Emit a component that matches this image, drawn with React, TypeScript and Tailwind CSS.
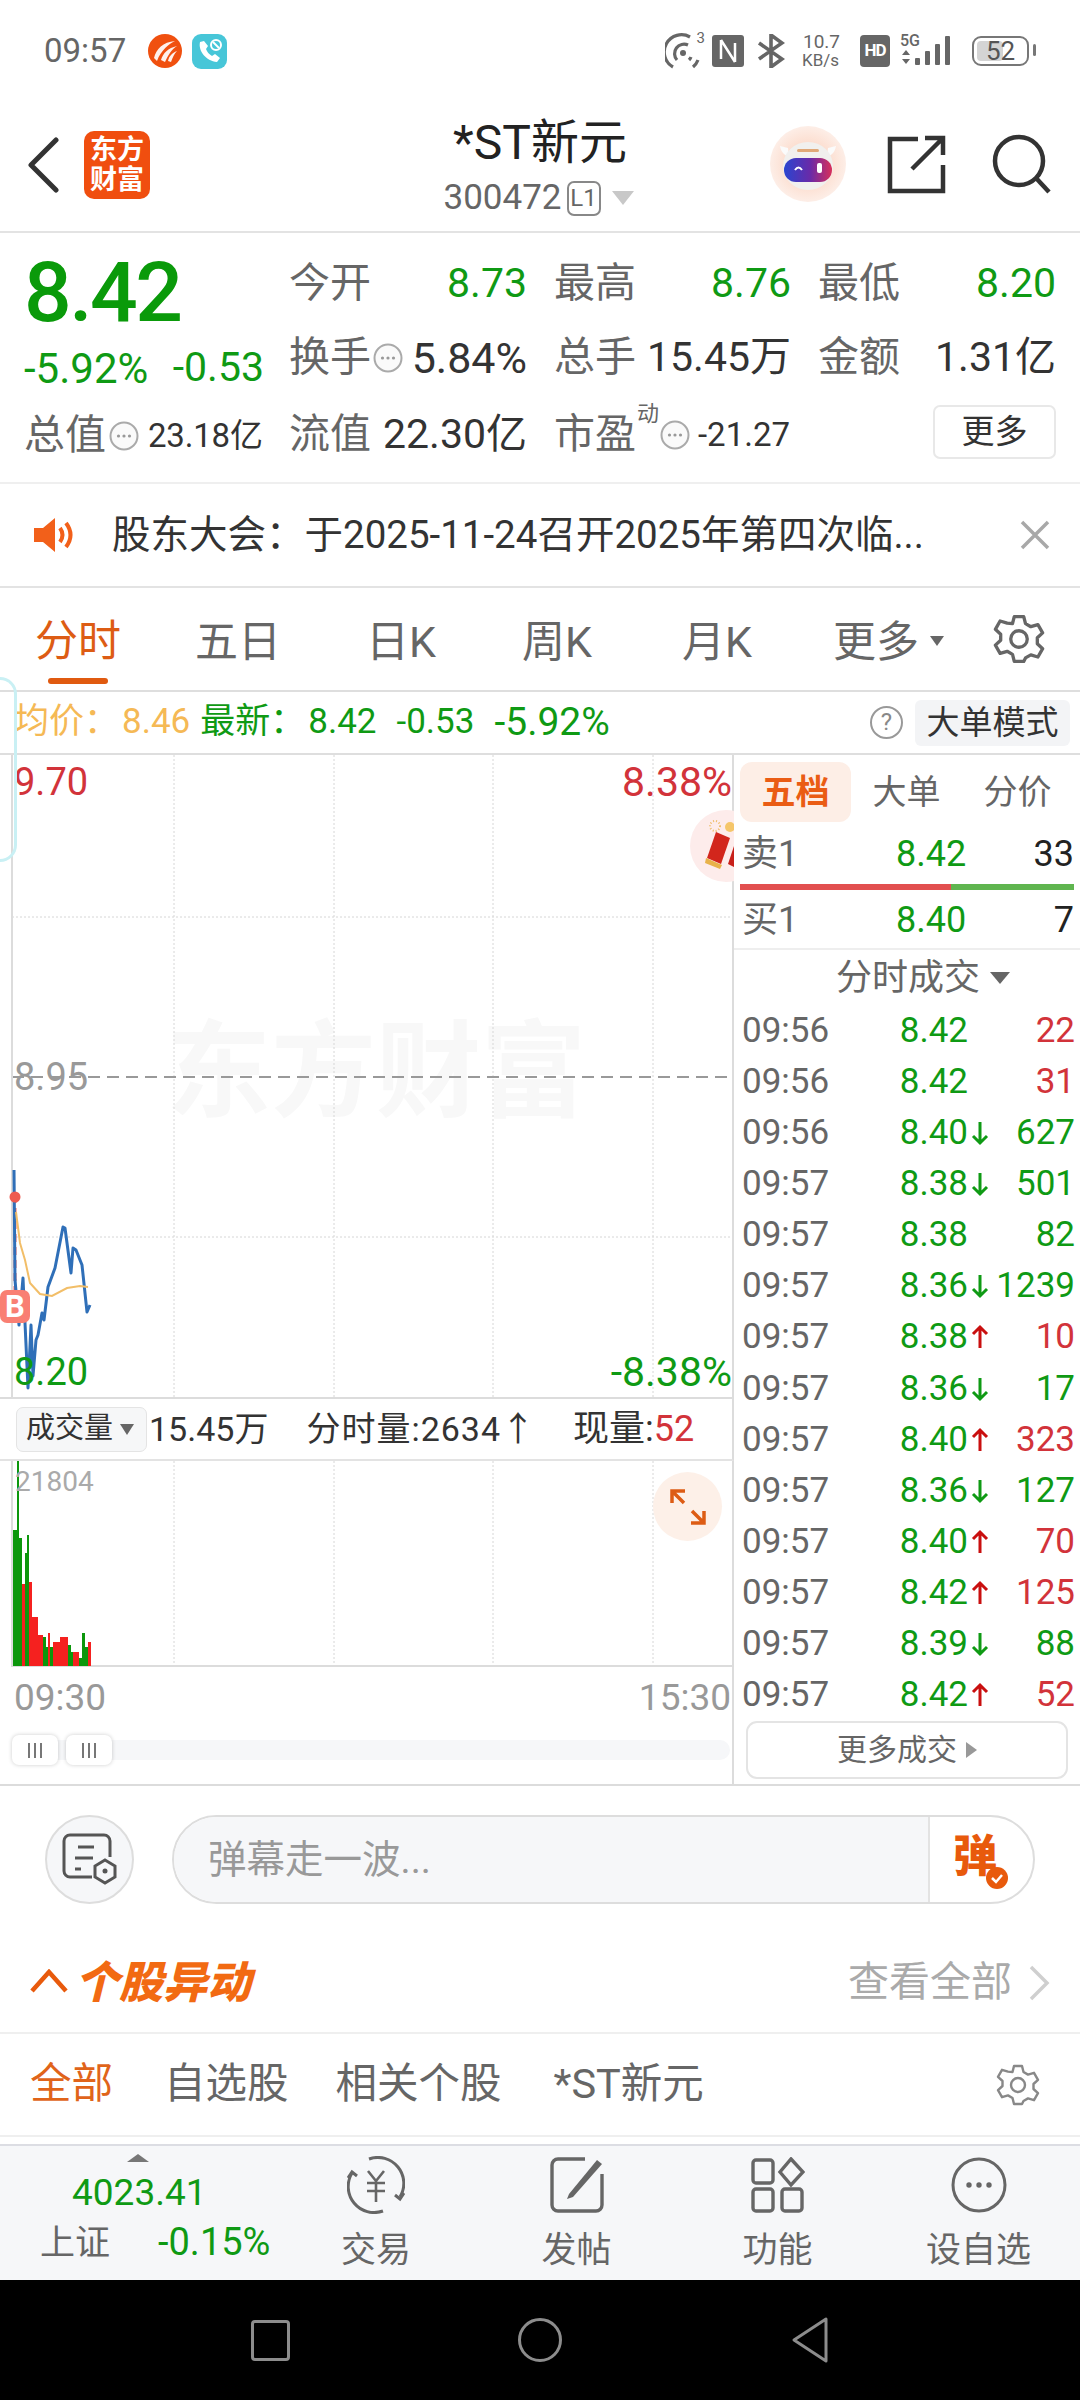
import type { ReactNode } from 'react'

const GREEN = '#0f9a14'

type Tick = { time: string; price: string; dir: '' | 'u' | 'd'; qty: string; up: boolean }

const ticks: Tick[] = [
  { time: '09:56', price: '8.42', dir: '', qty: '22', up: true },
  { time: '09:56', price: '8.42', dir: '', qty: '31', up: true },
  { time: '09:56', price: '8.40', dir: 'd', qty: '627', up: false },
  { time: '09:57', price: '8.38', dir: 'd', qty: '501', up: false },
  { time: '09:57', price: '8.38', dir: '', qty: '82', up: false },
  { time: '09:57', price: '8.36', dir: 'd', qty: '1239', up: false },
  { time: '09:57', price: '8.38', dir: 'u', qty: '10', up: true },
  { time: '09:57', price: '8.36', dir: 'd', qty: '17', up: false },
  { time: '09:57', price: '8.40', dir: 'u', qty: '323', up: true },
  { time: '09:57', price: '8.36', dir: 'd', qty: '127', up: false },
  { time: '09:57', price: '8.40', dir: 'u', qty: '70', up: true },
  { time: '09:57', price: '8.42', dir: 'u', qty: '125', up: true },
  { time: '09:57', price: '8.39', dir: 'd', qty: '88', up: false },
  { time: '09:57', price: '8.42', dir: 'u', qty: '52', up: true },
]

// traced from the picture: [x, y] in page pixels
const priceLine = [
  [14, 1170], [15, 1280], [19, 1325], [23, 1278], [25, 1323], [28, 1388], [31, 1325], [33, 1376], [36, 1340], [38, 1335], [42, 1313], [44, 1320], [48, 1287], [55, 1268], [63, 1227], [65, 1228], [71, 1273], [73, 1248], [76, 1250], [82, 1265], [87, 1312], [90, 1305],
]
const avgLine = [
  [16, 1212], [20, 1243], [25, 1260], [30, 1283], [40, 1294], [52, 1296], [67, 1288], [80, 1286], [88, 1287],
]

// [x start, x end, top y, red?]
const volBars: [number, number, number, boolean][] = [
  [13, 17, 1530, false], [17, 19, 1461, false], [19, 22, 1538, false], [22, 25, 1584, true], [25, 27, 1553, false], [27, 29, 1535, false], [29, 32, 1582, true], [32, 38, 1617, true], [38, 43, 1635, true], [43, 46, 1637, false], [46, 48, 1647, false], [48, 50, 1633, true], [50, 53, 1647, false], [53, 57, 1642, true], [57, 60, 1642, true], [60, 64, 1637, true], [64, 68, 1637, true], [68, 71, 1645, false], [71, 73, 1652, false], [73, 79, 1652, true], [79, 82, 1658, false], [82, 85, 1633, false], [85, 88, 1647, false], [88, 91, 1642, true],
]

const pts = (list: number[][], oy: number) => list.map(([x, y]) => `${x},${y - oy}`).join(' ')

function InfoDot({ size = 30 }: { size?: number }) {
  return (
    <svg width={size} height={size} viewBox="0 0 30 30" className="shrink-0">
      <circle cx="15" cy="15" r="13.5" fill="#fafafa" stroke="#aaa" strokeWidth="2" />
      <circle cx="9.5" cy="15" r="1.6" fill="#999" />
      <circle cx="15" cy="15" r="1.6" fill="#999" />
      <circle cx="20.5" cy="15" r="1.6" fill="#999" />
    </svg>
  )
}

function Gear({ size, color, stroke = 2.4 }: { size: number; color: string; stroke?: number }) {
  return (
    <svg width={size} height={size} viewBox="0 0 44 44" fill="none" stroke={color} strokeWidth={stroke} strokeLinejoin="round">
      <path d="M18 3h8l1.5 6 4.5 2.6 6-1.8 4 7-4.5 4.2v5l4.5 4.2-4 7-6-1.8-4.5 2.6L26 41h-8l-1.5-6-4.5-2.6-6 1.8-4-7L6.5 23v-5L2 13.800l4-7 6 1.800L16.500 9z" />
      <circle cx="22" cy="22" r="7" />
    </svg>
  )
}

function TickArrow({ dir }: { dir: 'u' | 'd' }) {
  const color = dir === 'u' ? '#c90f0f' : GREEN
  return (
    <svg width="20" height="26" viewBox="0 0 20 26" fill="none" stroke={color} strokeWidth="3" className={dir === 'd' ? 'rotate-180' : ''}>
      <path d="M10 24V3M3 10l7-7 7 7" />
    </svg>
  )
}

function StatusBar() {
  return (
    <div className="h-[100px] flex items-center pl-[44px] pr-[45px] pt-[2px] text-[#666]">
      <span className="text-[33px] w-[104px]">09:57</span>
      <svg width="34" height="34" viewBox="0 0 34 34" className="mr-[10px]">
        <circle cx="17" cy="17" r="17" fill="#f0500f" />
        <path d="M6 24C8 15 15 8 27 7 21 10 13 16 9 27zM13 26c2-7 7-12 16-14-5 3-9 9-12 16zM20 27c1-5 4-8 9-10-3 3-4 6-6 11z" fill="#fff" opacity=".92" />
      </svg>
      <svg width="35" height="35" viewBox="0 0 35 35">
        <rect width="35" height="35" rx="9" fill="#47c6d8" />
        <path d="M8 8c-2 9 6 19 17 20l3-4-5-4-3 2c-3-2-5-4-6-7l2-3-4-5z" fill="#fff" />
        <circle cx="24" cy="11" r="5" fill="none" stroke="#fff" strokeWidth="2" />
        <path d="M21 8l6 6" stroke="#fff" strokeWidth="2" />
      </svg>
      <div className="flex-1" />
      <div className="w-[40px] h-[36px] mr-[7px] relative">
        <svg width="40" height="36" viewBox="0 0 40 36" fill="none" stroke="#666" strokeWidth="3.200">
          <circle cx="18" cy="20" r="3" fill="#666" stroke="none" />
          <path d="M12 27a9.500 9.500 0 0 1 11-15M26 24a9 9 0 0 1-2 3" />
          <path d="M8 34A17 17 0 0 1 25 4M33 27a17 17 0 0 1-5 7" />
        </svg>
        <span className="absolute right-0 -top-[3px] text-[15px] leading-[16px]">3</span>
      </div>
      <svg width="32" height="32" viewBox="0 0 32 32" className="mr-[13px]">
        <rect width="32" height="32" rx="3" fill="#666" />
        <path d="M9 5v19M23 8v19M9 5l14 22" stroke="#fff" strokeWidth="2.500" fill="none" />
      </svg>
      <svg width="28" height="34" viewBox="0 0 28 34" fill="none" stroke="#666" strokeWidth="3.600" className="mr-[17px]">
        <path d="M2 9l23 16-11 8V1l11 8L2 25" />
      </svg>
      <div className="w-[46px] mr-[12px] flex flex-col items-start">
        <span className="text-[19px] leading-[19px] pl-[1px]">10.7</span>
        <span className="text-[17px] leading-[19px]">KB/s</span>
      </div>
      <div className="w-[30px] h-[32px] mr-[10px] bg-[#666] rounded-[4px] flex items-center justify-center text-white text-[17px] font-bold tracking-[-1px]">HD</div>
      <div className="w-[58px] h-[34px] mr-[14px] relative">
        <span className="absolute left-0 -top-[2px] text-[16px] leading-[18px] font-medium">5G</span>
        <svg width="58" height="34" viewBox="0 0 58 34" fill="#666">
          <path d="M2 21l4-5 4 5zM2 25h8l-4 5z" />
          <rect x="15" y="24" width="5" height="7" rx="1" />
          <rect x="25" y="17" width="5" height="14" rx="1" />
          <rect x="35" y="10" width="5" height="21" rx="1" />
          <rect x="45" y="2" width="5" height="29" rx="1" />
        </svg>
      </div>
      <div className="w-[57px] h-[30px] border-[2.500px] border-[#777] rounded-[9px] p-[3px] relative flex items-center mr-[6px]">
        <div className="h-full w-[26px] bg-[#d4d4d4] rounded-[4px]" />
        <span className="absolute inset-0 flex items-center justify-center text-[26px] text-[#555]">52</span>
        <div className="absolute -right-[9px] top-[6px] w-[3px] h-[12px] bg-[#777] rounded-[2px]" />
      </div>
    </div>
  )
}

function Header() {
  return (
    <div className="h-[133px] border-b-2 border-[#e3e3e3] flex items-center relative">
      <svg width="32" height="56" viewBox="0 0 32 56" fill="none" stroke="#333" strokeWidth="5" strokeLinecap="round" strokeLinejoin="round" className="ml-[27px] -mt-[2px]">
        <path d="M29 3L4 28l25 25" />
      </svg>
      <div className="ml-[25px] -mt-[2px] w-[66px] h-[68px] rounded-[10px] bg-[#f04e0f] text-white text-[27px] leading-[30px] font-bold text-center flex flex-col items-center justify-center">
        <span>东方</span>
        <span>财富</span>
      </div>
      <div className="absolute left-0 right-0 top-0 flex flex-col items-center">
        <div className="h-[66px] pt-[18px] text-[48px] leading-[50px] text-[#222]">*ST新元</div>
        <div className="flex items-center h-[46px] pt-[18px] pr-[3px] text-[35px] text-[#666]">
          <span>300472</span>
          <span className="ml-[5px] w-[34px] h-[35px] border-2 border-[#888] rounded-[7px] text-[24px] leading-[31px] text-center">L1</span>
          <span className="ml-[11px] w-0 h-0 border-x-[11px] border-x-transparent border-t-[14px] border-t-[#c8c8c8]" />
        </div>
      </div>
      <div className="flex-1" />
      <svg width="76" height="76" viewBox="0 0 76 76" className="-mt-[4px]">
        <defs>
          <linearGradient id="visor" x1="0" x2="1" y1="0" y2="0">
            <stop offset="0" stopColor="#2a45d0" />
            <stop offset=".55" stopColor="#6a2aa8" />
            <stop offset="1" stopColor="#d8305a" />
          </linearGradient>
          <radialGradient id="halo">
            <stop offset=".5" stopColor="#fcdccd" />
            <stop offset="1" stopColor="#fdeee7" />
          </radialGradient>
        </defs>
        <circle cx="38" cy="38" r="38" fill="url(#halo)" />
        <path d="M10 20c1 6 4 9 9 11l-1-9zM66 20c-1 6-4 9-9 11l1-9z" fill="#fbfbfb" />
        <ellipse cx="38" cy="40" rx="25" ry="24" fill="#f1f0ee" />
        <rect x="27" y="23" width="22" height="3" rx="1.500" fill="#e0a878" />
        <rect x="14" y="32" width="48" height="24" rx="12" fill="url(#visor)" />
        <path d="M25 44q3.500-5 7 0" stroke="#fff" strokeWidth="2" fill="none" />
        <rect x="47" y="37" width="5" height="10" rx="2" fill="#fff" />
      </svg>
      <svg width="60" height="60" viewBox="0 0 60 60" fill="none" stroke="#333" strokeWidth="4.500" className="ml-[41px] -mt-[4px]">
        <path d="M31 5H3v52h53V31M25 35L55 5M38 4h18v17" />
      </svg>
      <svg width="60" height="60" viewBox="0 0 60 60" fill="none" stroke="#333" strokeWidth="4.500" className="ml-[45px] mr-[28px] -mt-[4px]">
        <circle cx="27" cy="27" r="24" />
        <path d="M44 44l13 14" />
      </svg>
    </div>
  )
}

function Pair({ label, value, color = '#222' }: { label: ReactNode; value: string; color?: string }) {
  return (
    <div className="flex items-center justify-between">
      <span className="text-[#666]">{label}</span>
      <span style={{ color }}>{value}</span>
    </div>
  )
}

function Quote() {
  return (
    <div className="h-[251px] flex border-b-2 border-[#efefef] pt-[14px] pl-[24px]">
      <div className="w-[240px] flex flex-col shrink-0">
        <div className="h-[92px] text-[84px] leading-[92px] font-medium tracking-[-2.500px] text-[#0a9a0a]">8.42</div>
        <div className="h-[58px] flex items-center justify-between text-[41px] text-[#0f9a14] whitespace-nowrap">
          <span className="text-[42px]">-5.92%</span>
          <span>-0.53</span>
        </div>
        <div className="h-[77px] flex items-center text-[33px] text-[#333] whitespace-nowrap">
          <span className="text-[41px] text-[#666]">总值</span>
          <span className="ml-[3px] mr-[9px]"><InfoDot /></span>
          <span className="tracking-[-.2px]">23.18亿</span>
        </div>
      </div>
      <div className="ml-[25px] grid grid-cols-[238px_237px_238px] gap-x-[27px] grid-rows-[74px_74px_80px] items-center text-[41px] whitespace-nowrap">
        <Pair label="今开" value="8.73" color={GREEN} />
        <Pair label="最高" value="8.76" color={GREEN} />
        <Pair label="最低" value="8.20" color={GREEN} />
        <div className="flex items-center justify-between">
          <div className="flex items-center text-[#666]">换手<span className="ml-[2px]"><InfoDot /></span></div>
          <span className="text-[#333] text-[43px]">5.84%</span>
        </div>
        <Pair label="总手" value="15.45万" color="#333" />
        <Pair label="金额" value="1.31亿" color="#333" />
        <Pair label="流值" value="22.30亿" color="#333" />
        <div className="flex items-center text-[#666] relative">
          <span>市盈</span>
          <span className="absolute left-[83px] top-[-2px] text-[22px] leading-[24px]">动</span>
          <span className="ml-[24px]"><InfoDot /></span>
          <span className="ml-[8px] text-[33px] text-[#333]">-21.27</span>
        </div>
        <div className="flex justify-end mb-[6px]">
          <div className="w-[123px] h-[54px] border-2 border-[#e8e8e8] rounded-[7px] flex items-center justify-center text-[33px] text-[#333]">更多</div>
        </div>
      </div>
    </div>
  )
}

function Notice() {
  return (
    <div className="h-[104px] border-b-2 border-[#e3e3e3] flex items-center pl-[34px] pr-[30px]">
      <svg width="44" height="36" viewBox="0 0 44 36" className="shrink-0">
        <path d="M0 11h9L21 1v34L9 25H0z" fill="#f2601a" />
        <path d="M26 11q5 7 0 14M32 6q9 12 0 24" stroke="#f2601a" strokeWidth="4" fill="none" />
      </svg>
      <span className="ml-[34px] text-[38.500px] text-[#333] whitespace-nowrap">股东大会：于2025-11-24召开2025年第四次临...</span>
      <div className="flex-1" />
      <svg width="30" height="30" viewBox="0 0 30 30" stroke="#a8a8a8" strokeWidth="3.500">
        <path d="M2 2l26 26M28 2L2 28" />
      </svg>
    </div>
  )
}

function PeriodTabs() {
  return (
    <div className="h-[104px] border-b-2 border-[#dedede] relative flex items-center pt-[6px] text-[43px] text-[#666]">
      <div className="absolute left-[35px] top-0 h-full flex flex-col items-center">
        <span className="h-[90px] leading-[106px] text-[#dd5c14]">分时</span>
        <span className="w-[60px] h-[6px] bg-[#e05a10] rounded-full" />
      </div>
      <span className="absolute left-[195px]">五日</span>
      <span className="absolute left-[366px]">日K</span>
      <span className="absolute left-[522px]">周K</span>
      <span className="absolute left-[682px]">月K</span>
      <span className="absolute left-[833px]">更多</span>
      <span className="absolute left-[930px] top-[48px] w-0 h-0 border-x-[7px] border-x-transparent border-t-[10px] border-t-[#666]" />
      <span className="absolute left-[993px] top-[25px]"><Gear size={52} color="#666" stroke={2.800} /></span>
    </div>
  )
}

function InfoLine() {
  return (
    <div className="h-[63px] border-b-2 border-[#dedede] flex items-center pl-[14px] pr-[10px] text-[35px] text-[#0f9a14] whitespace-pre">
      <span className="text-[#f5b955]">均价：</span>
      <span className="ml-[3px] text-[#f5b955]">8.46</span>
      <span className="ml-[10px]">最新：</span>
      <span className="ml-[3px]">8.42</span>
      <span className="ml-[20px]">-0.53</span>
      <span className="ml-[20px] text-[39px]">-5.92%</span>
      <div className="flex-1" />
      <span className="w-[33px] h-[33px] rounded-full border-2 border-[#999] text-[#888] text-[24px] leading-[29px] text-center">?</span>
      <span className="ml-[12px] w-[155px] h-[46px] bg-[#f3f4f6] rounded-[6px] text-[33px] leading-[46px] text-center text-[#333]">大单模式</span>
    </div>
  )
}

function PriceChart() {
  const xs = [174, 334, 493, 653]
  return (
    <div className="h-[642px] relative overflow-hidden">
      <div className="absolute left-[166px] top-[263px] text-[105px] leading-[110px] font-bold text-[#f8f8f8] whitespace-nowrap">东方财富</div>
      <svg width="734" height="642" viewBox="0 0 734 642" className="absolute inset-0" fill="none">
        {xs.map((x) => <path key={x} d={`M${x} 0V642`} stroke="#d6d6d6" strokeWidth="1" strokeDasharray="2 2" />)}
        <path d="M12 162H733M12 482H733" stroke="#d6d6d6" strokeWidth="1" strokeDasharray="2 2" />
        <path d="M12 322H733" stroke="#999" strokeWidth="2" strokeDasharray="12 7" />
        <path d="M12 0V642M733 0V642" stroke="#dcdcdc" strokeWidth="2" />
        <path d="M15 440V535" stroke="#f0645a" strokeWidth="3" strokeDasharray="8 5" />
        <polyline points={pts(priceLine, 755)} stroke="#2f6fb8" strokeWidth="3" strokeLinejoin="round" />
        <polyline points={pts(avgLine, 755)} stroke="#f2be68" strokeWidth="2" />
        <circle cx="15" cy="442" r="5.500" fill="#ee5a4f" />
      </svg>
      <span className="absolute left-[14px] top-[5px] text-[38px] leading-[44px] text-[#d2333a]">9.70</span>
      <span className="absolute right-[2px] top-[5px] text-[41px] leading-[44px] text-[#d2333a]">8.38%</span>
      <div className="absolute left-[690px] top-[55px] w-[72px] h-[72px] rounded-full bg-[#fdeceb] overflow-hidden">
        <svg width="44" height="72" viewBox="0 0 44 72">
          <path d="M26 22l14 6-9 26-14-6z" fill="#d2261c" />
          <path d="M44 36l-6 18 6 3z" fill="#c8201a" />
          <path d="M16 48l16 7-2 4-15-6z" fill="#e8b24a" />
          <circle cx="25" cy="16" r="5" fill="none" stroke="#eebb66" strokeWidth="2" strokeDasharray="1 2" />
          <circle cx="40" cy="17" r="5" fill="#f5c66a" />
        </svg>
      </div>
      <span className="absolute left-[14px] top-[300px] text-[38px] leading-[44px] text-[#999]">8.95</span>
      <span className="absolute left-[14px] top-[595px] text-[38px] leading-[44px] text-[#0f9a14]">8.20</span>
      <span className="absolute right-[2px] top-[595px] text-[41px] leading-[44px] text-[#0f9a14]">-8.38%</span>
      <div className="absolute left-0 top-[535px] w-[30px] h-[33px] rounded-[7px] bg-[#f97f73] text-white text-[31px] leading-[33px] font-bold text-center">B</div>
    </div>
  )
}

function VolumeHeader() {
  return (
    <div className="h-[64px] border-t-2 border-[#dcdcdc] border-b-2 border-b-[#e3e3e3] flex items-center text-[34px] text-[#333] pl-[16px] whitespace-nowrap border-r-2 border-r-[#dcdcdc]">
      <div className="w-[131px] h-[45px] rounded-[7px] bg-[#f6f7f8] border border-[#e4e4e4] flex items-center pl-[9px] text-[29px]">
        成交量
        <span className="ml-[7px] w-0 h-0 border-x-[7px] border-x-transparent border-t-[11px] border-t-[#666]" />
      </div>
      <span className="ml-[2px]">15.45万</span>
      <span className="ml-[38px] tracking-[1px]">分时量:2634↑</span>
      <span className="ml-[37px] text-[36px]">现量:<span className="text-[#d2333a]">52</span></span>
    </div>
  )
}

function VolumeChart() {
  const xs = [174, 334, 493, 653]
  return (
    <div className="h-[206px] relative">
      <svg width="734" height="206" viewBox="0 0 734 206" className="absolute inset-0">
        {xs.map((x) => <path key={x} d={`M${x} 0V204`} stroke="#d6d6d6" strokeWidth="1" strokeDasharray="2 2" />)}
        <path d="M12 0V206M733 0V206" stroke="#dcdcdc" strokeWidth="2" />
        <path d="M12 205H733" stroke="#dcdcdc" strokeWidth="2" />
        {volBars.map(([a, b, top, red]) => (
          <rect key={a} x={a} y={top - 1461} width={b - a} height={1666 - top} fill={red ? '#f5211f' : '#0c970c'} />
        ))}
      </svg>
      <span className="absolute left-[15px] top-[3px] text-[28px] leading-[36px] text-[#aaa]">21804</span>
      <div className="absolute left-[653px] top-[11px] w-[69px] h-[69px] rounded-full bg-[#fdf0e8] flex items-center justify-center">
        <svg width="36" height="36" viewBox="0 0 36 36" fill="none" stroke="#dd5c14" strokeWidth="3.500">
          <path d="M2 14V2h13M3 3l11 11M34 22v12H21M33 33L22 22" />
        </svg>
      </div>
    </div>
  )
}

function SliderHandle() {
  return (
    <div className="w-[46px] h-[30px] bg-white rounded-[7px] shadow-[0_0_4px_rgba(0,0,0,.2)] flex items-center justify-center gap-[4px]">
      <i className="w-[2px] h-[15px] bg-[#777]" /><i className="w-[2px] h-[15px] bg-[#777]" /><i className="w-[2px] h-[15px] bg-[#777]" />
    </div>
  )
}

function TimeAxis() {
  return (
    <div className="h-[117px] border-r-2 border-r-[#dcdcdc]">
      <div className="h-[61px] pl-[14px] pr-[1px] flex items-center justify-between text-[37px] text-[#999]">
        <span>09:30</span>
        <span>15:30</span>
      </div>
      <div className="mt-[12px] ml-[12px] mr-[2px] h-[20px] rounded-full bg-[#f6f7f9] relative">
        <div className="absolute left-0 -top-[5px] flex gap-[8px]">
          <SliderHandle />
          <SliderHandle />
        </div>
      </div>
    </div>
  )
}

function Book({ label, price, qty }: { label: string; price: string; qty: string }) {
  return (
    <div className="h-[60px] flex items-center pl-[8px] pr-[6px] text-[36px]">
      <span className="w-[154px] text-[#666]">{label}</span>
      <span className="w-[65px] text-[#0f9a14] text-right">{price}</span>
      <span className="flex-1 text-right text-[#222]">{qty}</span>
    </div>
  )
}

function SidePanel() {
  return (
    <div className="w-[346px] flex flex-col">
      <div className="h-[69px] pt-[7px] pl-[6px] flex text-[34px] text-[#666] leading-[60px]">
        <span className="w-[111px] h-[60px] bg-[#fdeee6] rounded-[12px] text-center text-[#ea5c14] font-bold">五档</span>
        <span className="w-[111px] text-center">大单</span>
        <span className="w-[111px] text-center">分价</span>
      </div>
      <Book label="卖1" price="8.42" qty="33" />
      <div className="mx-[6px] h-[6px] flex">
        <div className="w-[211px] bg-[#e24f4f]" />
        <div className="flex-1 bg-[#5fb54f]" />
      </div>
      <div className="h-[58px]">
        <Book label="买1" price="8.40" qty="7" />
      </div>
      <div className="h-[57px] border-t-2 border-[#eeeeee] flex items-center justify-center text-[36px] text-[#666] pl-[32px]">
        分时成交
        <span className="ml-[10px] w-0 h-0 border-x-[10px] border-x-transparent border-t-[12px] border-t-[#666]" />
      </div>
      <div className="flex flex-col">
        {ticks.map((t, i) => (
          <div key={i} className="h-[51.150px] grid grid-cols-[226px_24px_83px] items-center pl-[8px] text-[35px] leading-[44px]">
            <div className="flex justify-between">
              <span className="text-[#666]">{t.time}</span>
              <span className="text-[#0f9a14]">{t.price}</span>
            </div>
            <div className="flex justify-center h-[26px]">{t.dir && <TickArrow dir={t.dir} />}</div>
            <div className={`text-right whitespace-nowrap ${t.up ? 'text-[#d2333a]' : 'text-[#0f9a14]'}`}>{t.qty}</div>
          </div>
        ))}
      </div>
      <div className="ml-[12px] w-[322px] h-[58px] border-2 border-[#e4e4e4] rounded-[11px] flex items-center justify-center text-[30px] text-[#666]">
        更多成交
        <span className="ml-[9px] w-0 h-0 border-y-[8px] border-y-transparent border-l-[11px] border-l-[#999]" />
      </div>
    </div>
  )
}

function CommentBar() {
  return (
    <div className="h-[147px] flex items-center pl-[45px] pr-[45px]">
      <div className="w-[89px] h-[89px] rounded-full bg-[#f6f7f9] border-2 border-[#dddddd] flex items-center justify-center">
        <svg width="56" height="54" viewBox="0 0 56 54" fill="none" stroke="#555" strokeWidth="3">
          <path d="M48 24V8a6 6 0 0 0-6-6H8a6 6 0 0 0-6 6v30a6 6 0 0 0 6 6h22" />
          <path d="M16 14h16M13 25h18M13 36h6" />
          <path d="M43 27l10 6v11l-10 6-10-6V33z" />
          <circle cx="43" cy="38" r="2.500" fill="#555" stroke="none" />
        </svg>
      </div>
      <div className="ml-[38px] flex-1 h-[89px] rounded-full border-2 border-[#dddddd] overflow-hidden flex">
        <div className="flex-1 bg-[#f6f7f9] pl-[34px] flex items-center text-[38.500px] text-[#999] whitespace-nowrap">弹幕走一波...</div>
        <div className="w-[105px] border-l-2 border-[#e3e3e3] relative">
          <span className="absolute left-[23px] top-[12px] text-[44px] leading-[56px] font-black text-[#e85a0c]">弹</span>
          <svg width="22" height="22" viewBox="0 0 22 22" className="absolute left-[56px] top-[50px]">
            <circle cx="11" cy="11" r="11" fill="#e85a0c" />
            <path d="M6 11l4 4 6-7" fill="none" stroke="#fff" strokeWidth="2.500" />
          </svg>
        </div>
      </div>
    </div>
  )
}

function MoveHeader() {
  return (
    <div className="h-[101px] border-b-2 border-[#efefef] flex items-center pl-[30px] pr-[30px]">
      <svg width="38" height="24" viewBox="0 0 38 24" fill="none" stroke="#e85a0c" strokeWidth="4.500" className="-mt-[3px]">
        <path d="M2 22L19 3l17 19" />
      </svg>
      <span className="ml-[7px] text-[44px] leading-[50px] font-black italic text-[#f26a12]">个股异动</span>
      <div className="flex-1" />
      <span className="text-[41px] text-[#aaa]">查看全部</span>
      <svg width="22" height="36" viewBox="0 0 22 36" fill="none" stroke="#cfcfcf" strokeWidth="3.500" className="ml-[16px]">
        <path d="M3 2l16 16L3 34" />
      </svg>
    </div>
  )
}

function MoveTabs() {
  return (
    <div className="h-[103px] border-b-2 border-[#efefef] flex items-center pl-[30px] pr-[40px] text-[41.500px] text-[#666]">
      <span className="text-[#e0641a]">全部</span>
      <span className="ml-[51px]">自选股</span>
      <span className="ml-[47px]">相关个股</span>
      <span className="ml-[52px]">*ST新元</span>
      <div className="flex-1" />
      <Gear size={44} color="#888" />
    </div>
  )
}

function NavItem({ label, children, w }: { label: string; children: ReactNode; w: number }) {
  return (
    <div className="flex flex-col items-center" style={{ width: w }}>
      <div className="h-[58px] mt-[10px] flex items-center justify-center">{children}</div>
      <span className="mt-[16px] text-[35px] leading-[42px] text-[#666]">{label}</span>
    </div>
  )
}

function BottomBar() {
  return (
    <div className="h-[136px] bg-[#f6f7f9] border-t-2 border-[#dcdde3] flex">
      <div className="w-[276px] relative shrink-0 whitespace-nowrap">
        <span className="absolute left-[127px] top-[8px] w-0 h-0 border-x-[11px] border-x-transparent border-b-[8px] border-b-[#777]" />
        <span className="absolute left-[72px] top-[24px] text-[37px] leading-[46px] text-[#0f9a14]">4023.41</span>
        <span className="absolute left-[40px] top-[76px] text-[35px] leading-[44px] text-[#666]">上证</span>
        <span className="absolute left-[158px] top-[74px] text-[38px] leading-[44px] text-[#0f9a14]">-0.15%</span>
      </div>
      <NavItem label="交易" w={200}>
        <svg width="58" height="58" viewBox="0 0 58 58" fill="none" stroke="#666" strokeWidth="3">
          <path d="M36 55A26 26 0 0 1 5 17M22 3a26 26 0 0 1 31 38" />
          <path d="M1 22l4-6 5 4M57 37l-4 6-5-4" />
          <path d="M21 15l8 10 8-10M20 27h18M20 35h18M29 25v21" strokeWidth="2.600" />
        </svg>
      </NavItem>
      <NavItem label="发帖" w={201}>
        <svg width="56" height="58" viewBox="0 0 56 58" fill="none" stroke="#666" strokeWidth="3.400">
          <path d="M36 3H9a6 6 0 0 0-6 6v40a6 6 0 0 0 6 6h38a6 6 0 0 0 6-6V18" />
          <path d="M20 38L48 4l5 4-29 33-6 2z" fill="#666" stroke="none" />
        </svg>
      </NavItem>
      <NavItem label="功能" w={201}>
        <svg width="54" height="56" viewBox="0 0 54 56" fill="none" stroke="#666" strokeWidth="3.400">
          <rect x="2" y="3" width="20" height="23" rx="3" />
          <rect x="2" y="32" width="20" height="22" rx="3" />
          <rect x="31" y="32" width="20" height="22" rx="3" />
          <path d="M40 2l12 13-12 13-11-13z" />
        </svg>
      </NavItem>
      <NavItem label="设自选" w={201}>
        <svg width="56" height="58" viewBox="0 0 56 58" fill="#666">
          <circle cx="28" cy="29" r="26" fill="none" stroke="#666" strokeWidth="3" />
          <circle cx="18" cy="29" r="2.700" />
          <circle cx="28" cy="29" r="2.700" />
          <circle cx="38" cy="29" r="2.700" />
        </svg>
      </NavItem>
    </div>
  )
}

function SystemNav() {
  return (
    <div className="h-[120px] bg-black flex items-center justify-center">
      <div className="w-[39px] h-[41px] border-[3px] border-[#8c8c8c] rounded-[4px] mr-[228px]" />
      <div className="w-[44px] h-[44px] border-[3px] border-[#8c8c8c] rounded-full mr-[229px]" />
      <svg width="38" height="46" viewBox="0 0 38 46" fill="none" stroke="#8c8c8c" strokeWidth="3" strokeLinejoin="round">
        <path d="M35 2v42L3 23z" />
      </svg>
    </div>
  )
}

export default function App() {
  return (
    <div className="w-[1080px] h-[2400px] bg-white overflow-hidden relative font-['Roboto','Noto_Sans_CJK_SC',sans-serif]">
      <StatusBar />
      <Header />
      <Quote />
      <Notice />
      <PeriodTabs />
      <InfoLine />
      <div className="flex h-[1031px] border-b-2 border-[#dcdcdc]">
        <div className="w-[734px] shrink-0">
          <PriceChart />
          <VolumeHeader />
          <VolumeChart />
          <TimeAxis />
        </div>
        <SidePanel />
      </div>
      <CommentBar />
      <MoveHeader />
      <MoveTabs />
      <div className="h-[7px]" />
      <BottomBar />
      <SystemNav />
      <div className="absolute left-0 top-[677px] w-[17px] h-[185px] border-[3px] border-l-0 border-[#c9f0f4] rounded-r-[20px]" />
    </div>
  )
}
